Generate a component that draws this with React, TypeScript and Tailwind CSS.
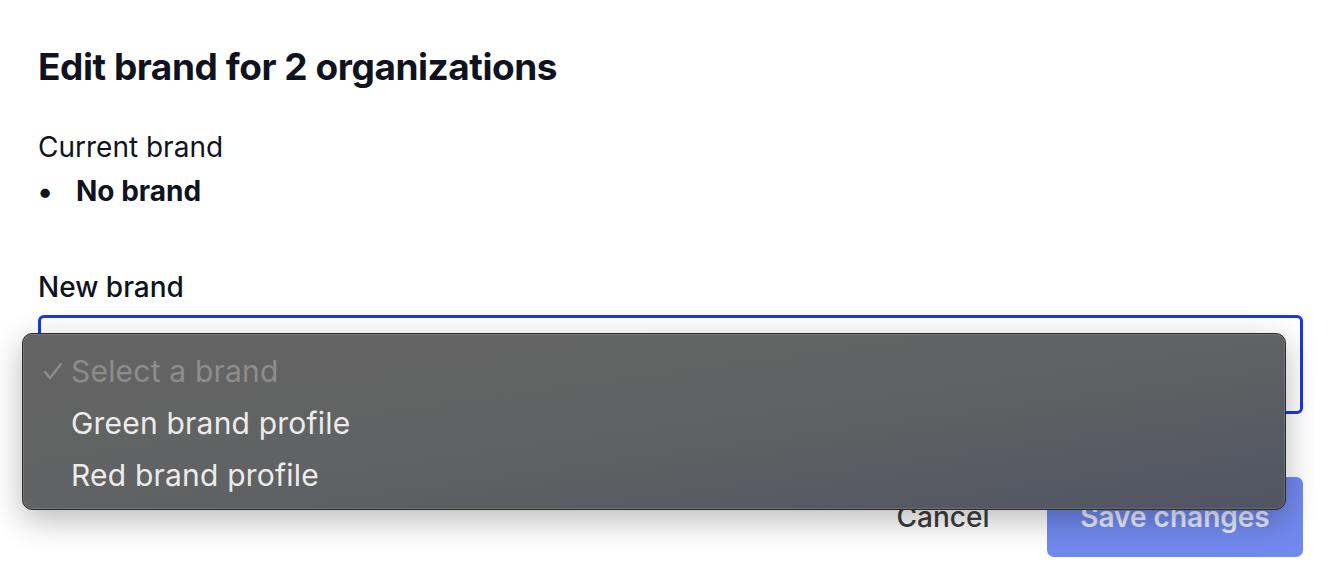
import React from 'react';

export default function App() {
    const itemClass = "flex items-center h-[52px] text-[30px] leading-none tracking-[0.2px]";

    return (
        <div className="relative w-[1340px] h-[580px] bg-white overflow-hidden font-['Inter',sans-serif] text-[#0f1320]">
            <div className="pl-[38px] pr-[37px] pt-[47px]">
                <h1 className="text-[37px] leading-[40px] font-bold tracking-[-0.45px]">Edit brand for 2 organizations</h1>

                <div className="mt-[38px]">
                    <p className="text-[28px] leading-[44px]">Current brand</p>
                    <ul className="text-[28px] leading-[44px] font-bold">
                        <li className="flex items-center">
                            <span className="w-[38px] text-[30px]">•</span>
                            <span>No brand</span>
                        </li>
                    </ul>
                </div>

                <div className="mt-[56px]">
                    <label className="block text-[28px] leading-[36px] font-medium">New brand</label>
                    <div className="mt-[10px] h-[99px] rounded-[6px] border-[3px] border-[#1638e6] bg-white"></div>
                </div>

                <div className="mt-[63px] flex justify-end items-center gap-[24px]">
                    <button className="w-[160px] h-[80px] text-[28px] font-medium text-[#3d3d3d]">Cancel</button>
                    <button className="w-[256px] h-[80px] rounded-[7px] bg-[#7189ee] text-[28px] font-semibold text-white/85">Save changes</button>
                </div>
            </div>

            {/* native select popup */}
            <div className="absolute left-[22px] top-[333px] w-[1264px] h-[177px] rounded-[10px] border border-[#2b2b2b] bg-gradient-to-br from-[#646464] via-[#616263] to-[#505562] shadow-[0_10px_32px_rgba(0,0,0,0.28),inset_0_0_0_1px_rgba(255,255,255,0.12)] pt-[11px]">
                <div className={`${itemClass} text-[#8d8d8d]`}>
                    <span className="w-[48px] pl-[20px] flex items-center">
                        <svg width="20" height="18" viewBox="0 0 20 18" fill="none" stroke="currentColor" strokeWidth="2.4" strokeLinecap="round" strokeLinejoin="round">
                            <path d="M2 10l5 6L18 2" />
                        </svg>
                    </span>
                    <span>Select a brand</span>
                </div>
                <div className={`${itemClass} text-[#ececec] pl-[48px]`}>Green brand profile</div>
                <div className={`${itemClass} text-[#ececec] pl-[48px]`}>Red brand profile</div>
            </div>
        </div>
    );
}
